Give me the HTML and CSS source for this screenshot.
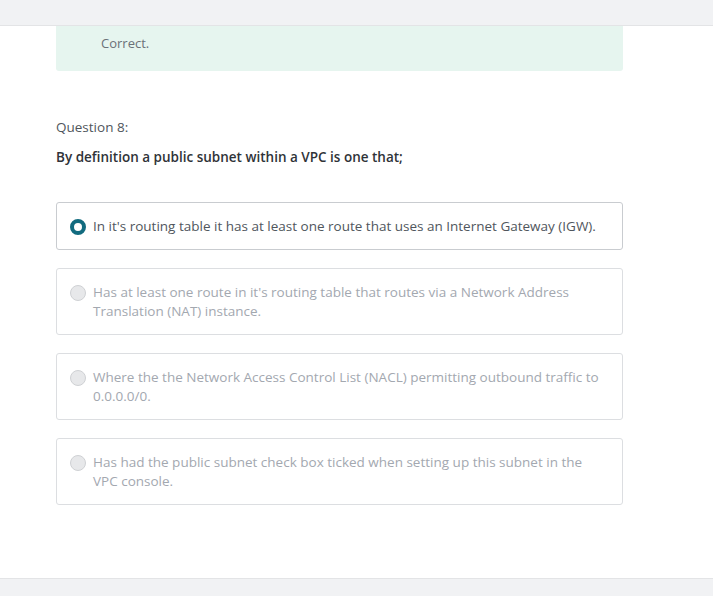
FILE: index.html
```html
<!DOCTYPE html>
<html>
<head>
<meta charset="utf-8">
<link rel="stylesheet" href="styles.css">
</head>
<body>
<header class="topbar"></header>
<main class="content">
  <div class="feedback">Correct.</div>
  <section class="question">
    <div class="q-label">Question 8:</div>
    <div class="q-text">By definition a public subnet within a VPC is one that;</div>
    <div class="options">
      <label class="option selected"><span class="radio"></span><span class="opt-text">In it's routing table it has at least one route that uses an Internet Gateway (IGW).</span></label>
      <label class="option"><span class="radio"></span><span class="opt-text">Has at least one route in it's routing table that routes via a Network Address Translation (NAT) instance.</span></label>
      <label class="option"><span class="radio"></span><span class="opt-text">Where the the Network Access Control List (NACL) permitting outbound traffic to 0.0.0.0/0.</span></label>
      <label class="option"><span class="radio"></span><span class="opt-text">Has had the public subnet check box ticked when setting up this subnet in the VPC console.</span></label>
    </div>
  </section>
</main>
<footer class="bottombar"></footer>
</body>
</html>
```
FILE: styles.css
```css
html, body {
  margin: 0;
  padding: 0;
}
body {
  width: 713px;
  height: 596px;
  overflow: hidden;
  background: #fff;
  font-family: "Open Sans", "Liberation Sans", sans-serif;
  font-size: 13.5px;
  color: #3a3f45;
  display: flex;
  flex-direction: column;
}
.topbar {
  height: 25px;
  background: #f1f2f4;
  border-bottom: 1px solid #e3e4e6;
  flex: none;
}
.content {
  flex: 1;
  padding: 0 90px 0 56px;
}
.feedback {
  background: #e6f5ef;
  height: 45px;
  box-sizing: border-box;
  padding: 8px 0 0 45px;
  color: #6b7178;
  font-size: 13px;
  border-radius: 0 0 3px 3px;
}
.question {
  padding-top: 47px;
}
.q-label {
  color: #50565c;
  line-height: 18px;
}
.q-text {
  margin-top: 12px;
  font-weight: 600;
  color: #2f3338;
  line-height: 18px;
}
.options {
  margin-top: 36px;
  display: flex;
  flex-direction: column;
  gap: 18px;
}
.option {
  display: flex;
  align-items: flex-start;
  gap: 7px;
  border: 1px solid #dcdee1;
  border-radius: 3px;
  padding: 14px 20px 13px 13px;
  color: #a3a8b0;
  line-height: 19px;
}
.option.selected {
  border-color: #c9ccd0;
  color: #50565d;
  padding: 14px 20px 13px 13px;
}
.radio {
  flex: none;
  width: 16px;
  height: 16px;
  box-sizing: border-box;
  border-radius: 50%;
  margin-top: 2px;
  background: #e7e8ea;
  border: 1px solid #cfd1d4;
}
.option.selected .radio {
  background: #fff;
  border: 4.5px solid #126b7f;
}
.bottombar {
  height: 17px;
  background: #f1f2f4;
  border-top: 1px solid #e3e4e6;
  flex: none;
}
```
